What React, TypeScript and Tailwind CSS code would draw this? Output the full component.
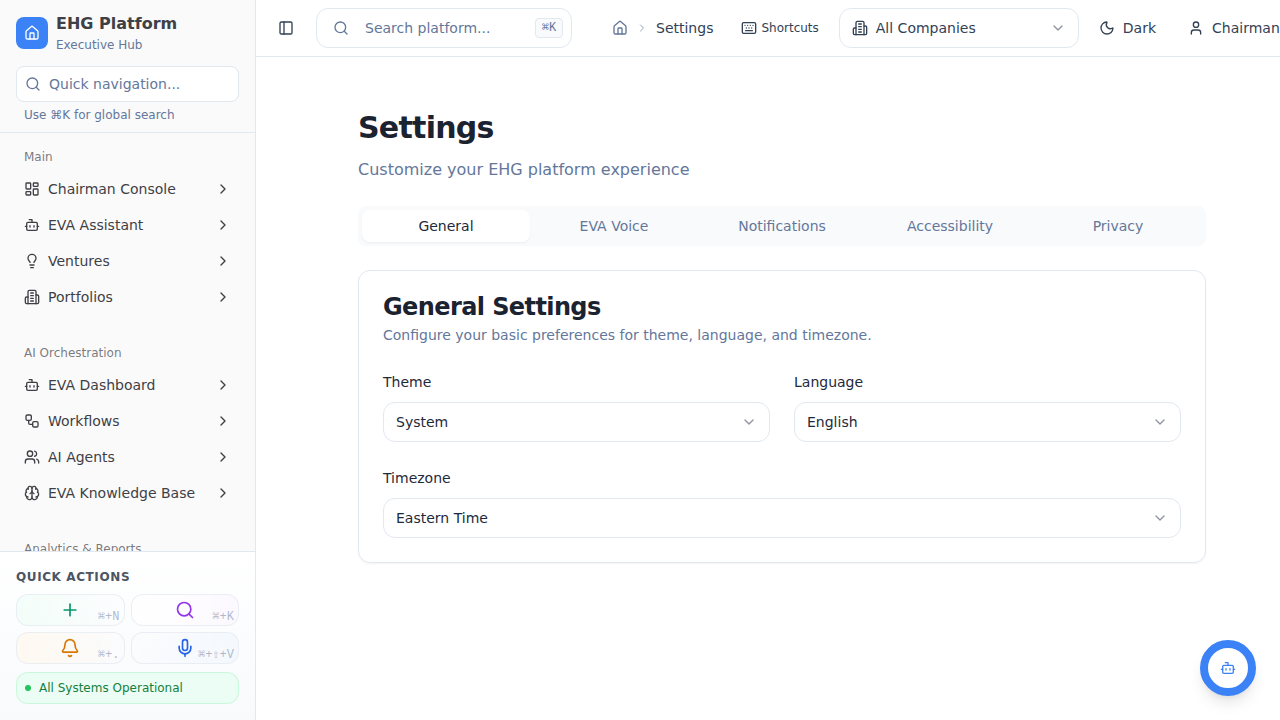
import {
    Bell,
    Bot,
    Brain,
    ChevronDown,
    ChevronRight,
    Home,
    Keyboard,
    LayoutDashboard,
    Lightbulb,
    Mic,
    Moon,
    PanelLeft,
    Plus,
    Search,
    User,
    Users,
    Workflow,
} from "lucide-react";
import type { LucideIcon } from "lucide-react";

// older lucide Building2, the one with four floor lines
const Building: LucideIcon = (({ className }: { className?: string }) => (
    <svg
        viewBox="0 0 24 24"
        fill="none"
        stroke="currentColor"
        strokeWidth={2}
        strokeLinecap="round"
        strokeLinejoin="round"
        className={className}
    >
        <path d="M6 22V4a2 2 0 0 1 2-2h8a2 2 0 0 1 2 2v18Z" />
        <path d="M6 12H4a2 2 0 0 0-2 2v6a2 2 0 0 0 2 2h2" />
        <path d="M18 9h2a2 2 0 0 1 2 2v9a2 2 0 0 1-2 2h-2" />
        <path d="M10 6h4" />
        <path d="M10 10h4" />
        <path d="M10 14h4" />
        <path d="M10 18h4" />
    </svg>
)) as unknown as LucideIcon;

interface NavItem {
    label: string;
    icon: LucideIcon;
}

const mainItems: NavItem[] = [
    { label: "Chairman Console", icon: LayoutDashboard },
    { label: "EVA Assistant", icon: Bot },
    { label: "Ventures", icon: Lightbulb },
    { label: "Portfolios", icon: Building },
];

const aiItems: NavItem[] = [
    { label: "EVA Dashboard", icon: Bot },
    { label: "Workflows", icon: Workflow },
    { label: "AI Agents", icon: Users },
    { label: "EVA Knowledge Base", icon: Brain },
];

const tabs = ["General", "EVA Voice", "Notifications", "Accessibility", "Privacy"];

function NavGroup({ title, items }: { title: string; items: NavItem[] }) {
    return (
        <div className="mb-[24px]">
            <div className="h-[28px] px-2 flex items-center text-xs text-[#3f3f46]/70">{title}</div>
            <ul>
                {items.map((item) => (
                    <li key={item.label} className="h-[36px] px-2 flex items-center text-sm text-[#3f3f46]">
                        <item.icon className="w-4 h-4 mr-2 shrink-0" />
                        <span className="flex-1">{item.label}</span>
                        <ChevronRight className="w-4 h-4" />
                    </li>
                ))}
            </ul>
        </div>
    );
}

function QuickAction({
    icon: Icon,
    keys,
    color,
    tint,
}: {
    icon: LucideIcon;
    keys: string;
    color: string;
    tint: string;
}) {
    return (
        <div className={`relative h-[32px] rounded-xl border border-[#e2e8f0]/70 flex items-center justify-center ${tint}`}>
            <Icon className={`w-5 h-5 ${color}`} />
            <span className="absolute right-[4px] bottom-0 font-['Liberation_Mono',monospace] text-xs leading-[16px] text-[#64779a]/50">
                {keys}
            </span>
        </div>
    );
}

function SelectBox({ value }: { value: string }) {
    return (
        <div className="h-[40px] px-3 rounded-xl border border-[#e2e8f0] flex items-center justify-between text-sm text-[#1e293b]">
            <span>{value}</span>
            <ChevronDown className="w-4 h-4 text-[#1e293b]/50" />
        </div>
    );
}

export default function App() {
    return (
        <div className="h-screen w-[1280px] flex overflow-hidden bg-white font-['DejaVu_Sans',sans-serif] text-[#1e293b]">
            {/* Sidebar */}
            <aside className="w-[256px] shrink-0 flex flex-col border-r border-[#e2e8f0] bg-[#fafafa]">
                <div className="h-[133px] shrink-0 border-b border-[#e2e8f0] px-4 pt-[13px]">
                    <div className="flex items-start gap-2">
                        <div className="mt-[4px] w-8 h-8 rounded-lg bg-[#3b82f6] flex items-center justify-center">
                            <Home className="w-4 h-4 text-white" />
                        </div>
                        <div className="mt-[1px]">
                            <div className="text-base leading-[20px] font-bold text-[#3f3f46]">EHG Platform</div>
                            <div className="mt-[1px] text-xs leading-[20px] text-[#64779a]">Executive Hub</div>
                        </div>
                    </div>
                    <div className="mt-[11px] h-[36px] rounded-lg border border-[#e2e8f0] bg-white flex items-center px-2 gap-2 text-sm text-[#64779a]">
                        <Search className="w-4 h-4" />
                        <span>Quick navigation...</span>
                    </div>
                    <div className="mt-[5px] px-2 text-xs leading-[16px] text-[#64779a]">Use ⌘K for global search</div>
                </div>

                <nav className="flex-1 min-h-0 overflow-hidden px-4 pt-[10px]">
                    <NavGroup title="Main" items={mainItems} />
                    <NavGroup title="AI Orchestration" items={aiItems} />
                    <div className="h-[28px] px-2 flex items-center text-xs text-[#3f3f46]/70">Analytics &amp; Reports</div>
                </nav>

                <div className="h-[169px] shrink-0 border-t border-[#e2e8f0] bg-gradient-to-b from-white to-[#f8fafc] px-4 pt-[16px]">
                    <div className="text-xs leading-[18px] font-bold tracking-wider text-[#4b5563]">QUICK ACTIONS</div>
                    <div className="mt-[8px] grid grid-cols-2 gap-[6px]">
                        <QuickAction icon={Plus} keys="⌘+N" color="text-[#059669]" tint="bg-gradient-to-r from-[#ecfdf5]/60 to-white/0" />
                        <QuickAction icon={Search} keys="⌘+K" color="text-[#9333ea]" tint="bg-gradient-to-r from-white to-[#faf5ff]/60" />
                        <QuickAction icon={Bell} keys="⌘+." color="text-[#d97706]" tint="bg-gradient-to-r from-[#fff7ed]/80 to-white/0" />
                        <QuickAction icon={Mic} keys="⌘+⇧+V" color="text-[#2563eb]" tint="bg-gradient-to-r from-white/0 to-[#eff6ff]/60" />
                    </div>
                    <div className="mt-[8px] h-[32px] rounded-xl border border-[#bbf7d0]/70 bg-[#ecfdf5] flex items-center px-2 gap-2 text-xs text-[#15803d]">
                        <span className="w-[6px] h-[6px] rounded-full bg-[#22c55e]" />
                        All Systems Operational
                    </div>
                </div>
            </aside>

            {/* Main */}
            <div className="flex-1 min-w-0 flex flex-col relative">
                <header className="h-[57px] shrink-0 border-b border-[#e2e8f0] flex items-center text-sm text-[#334155] whitespace-nowrap pl-[22px]">
                    <PanelLeft className="w-4 h-4 shrink-0" />
                    <div className="ml-[22px] w-[256px] h-[40px] shrink-0 rounded-xl border border-[#e2e8f0] flex items-center pl-[16px] pr-[8px] text-[#64779a]">
                        <Search className="w-4 h-4" />
                        <span className="ml-[16px] flex-1">Search platform...</span>
                        <span className="w-[28px] h-[20px] rounded border border-[#e2e8f0] bg-[#f8fafc] font-['Liberation_Mono',monospace] text-xs flex items-center justify-center">⌘K</span>
                    </div>
                    <Home className="ml-[40px] w-4 h-4 shrink-0 text-[#64779a]" />
                    <ChevronRight className="ml-[8px] w-3 h-3 shrink-0 text-[#94a3b8]" />
                    <span className="ml-[8px]">Settings</span>
                    <Keyboard className="ml-[28px] w-4 h-4 shrink-0" />
                    <span className="ml-[4px] text-xs">Shortcuts</span>
                    <div className="ml-[20px] w-[240px] h-[40px] shrink-0 rounded-xl border border-[#e2e8f0] flex items-center px-3">
                        <Building className="w-4 h-4" />
                        <span className="ml-[8px] flex-1">All Companies</span>
                        <ChevronDown className="w-4 h-4 text-[#1e293b]/50" />
                    </div>
                    <Moon className="ml-[20px] w-4 h-4 shrink-0" />
                    <span className="ml-[8px]">Dark</span>
                    <User className="ml-[32px] w-4 h-4 shrink-0" />
                    <span className="ml-[8px]">Chairman</span>
                </header>

                <main className="flex-1 min-h-0 pl-[102px] pt-[49px]">
                    <div className="w-[848px]">
                        <h1 className="text-3xl leading-[44px] font-bold tracking-tight text-[#1b2230]">Settings</h1>
                        <p className="mt-[8px] text-base leading-[24px] text-[#64779a]">Customize your EHG platform experience</p>

                        <div className="mt-[24px] h-[40px] rounded-lg bg-[#f8fafc] p-[4px] grid grid-cols-5 text-sm text-[#64779a]">
                            {tabs.map((tab, i) => (
                                <div
                                    key={tab}
                                    className={
                                        i === 0
                                            ? "rounded-lg bg-white shadow-xs text-[#1e293b] flex items-center justify-center"
                                            : "flex items-center justify-center"
                                    }
                                >
                                    {tab}
                                </div>
                            ))}
                        </div>

                        <section className="mt-[24px] h-[293px] rounded-xl border border-[#e2e8f0] shadow-xs px-6 pt-[18px]">
                            <h2 className="text-2xl leading-[36px] font-bold tracking-tight text-[#1b2230]">General Settings</h2>
                            <p className="text-sm leading-[20px] text-[#64779a]">Configure your basic preferences for theme, language, and timezone.</p>

                            <div className="mt-[27px] grid grid-cols-2 gap-x-6">
                                <div>
                                    <div className="text-sm leading-[20px] mb-[10px]">Theme</div>
                                    <SelectBox value="System" />
                                </div>
                                <div>
                                    <div className="text-sm leading-[20px] mb-[10px]">Language</div>
                                    <SelectBox value="English" />
                                </div>
                            </div>
                            <div className="mt-[26px]">
                                <div className="text-sm leading-[20px] mb-[10px]">Timezone</div>
                                <SelectBox value="Eastern Time" />
                            </div>
                        </section>
                    </div>
                </main>

                <button className="absolute left-[944px] top-[640px] w-[56px] h-[56px] rounded-full bg-white border-[8px] border-[#3b82f6] shadow-lg flex items-center justify-center">
                    <Bot className="w-4 h-4 text-[#3b82f6]" />
                </button>
            </div>
        </div>
    );
}
